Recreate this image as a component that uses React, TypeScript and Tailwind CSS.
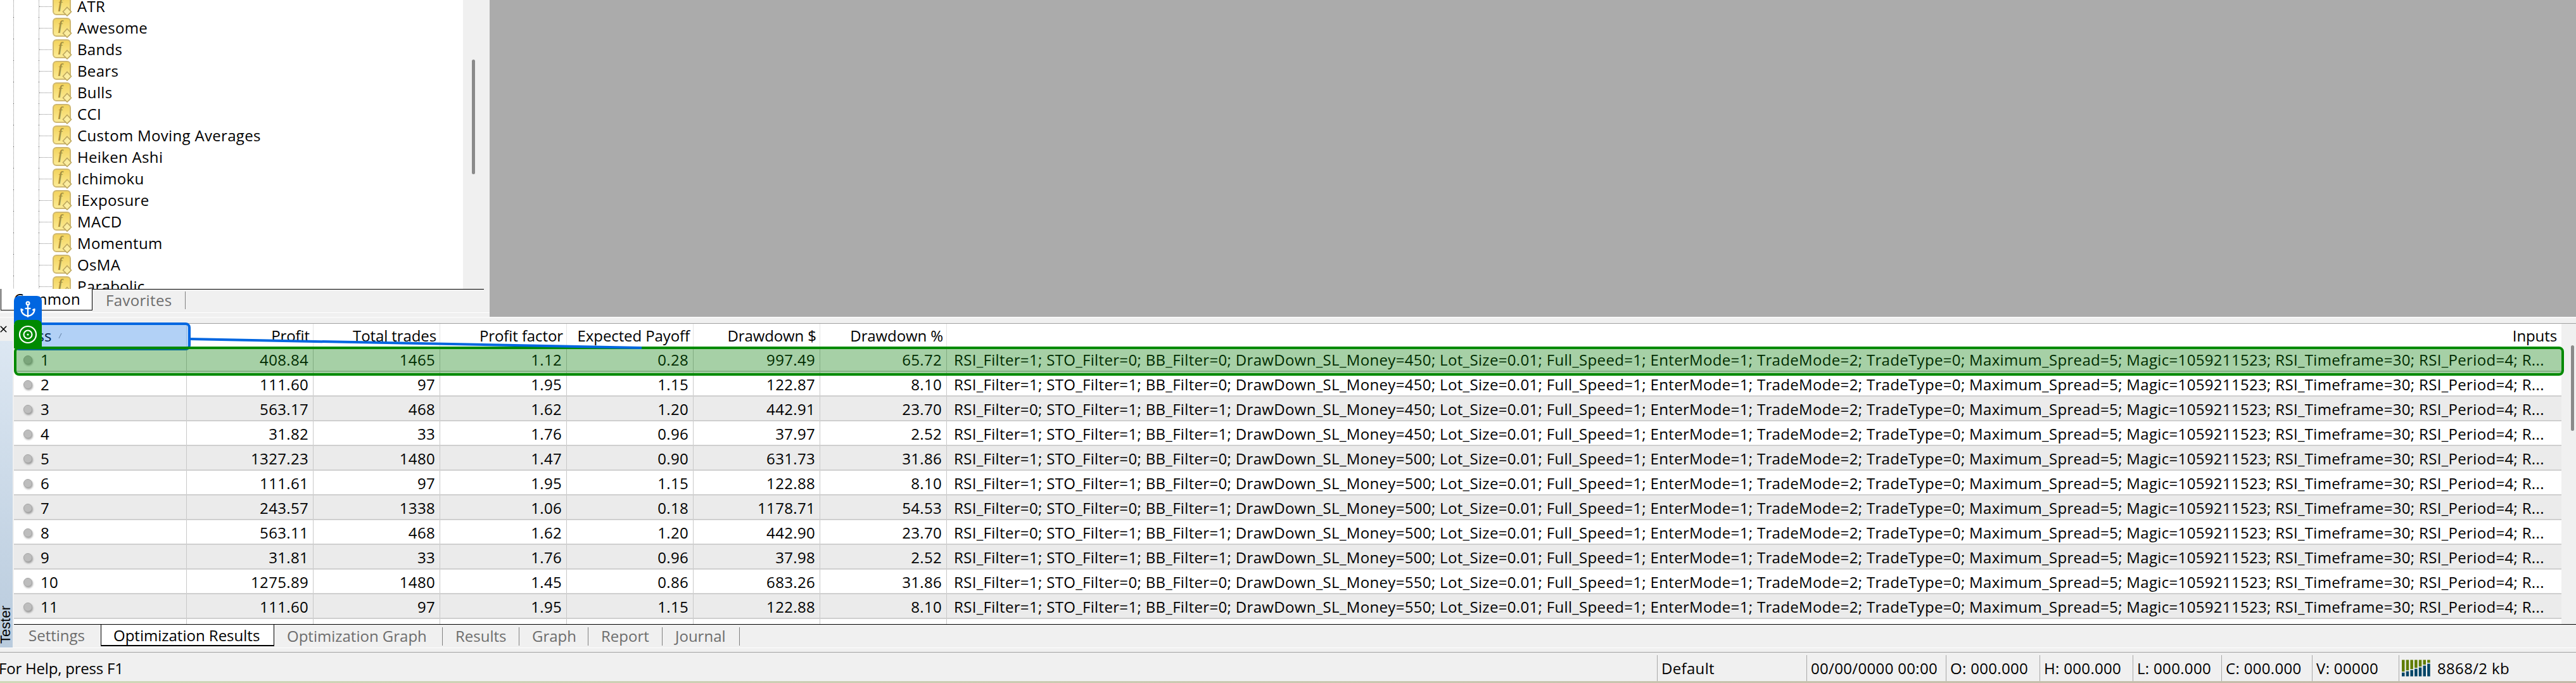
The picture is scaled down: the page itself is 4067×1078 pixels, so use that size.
import { Anchor, X } from 'lucide-react'

const indicators = ['ATR', 'Awesome', 'Bands', 'Bears', 'Bulls', 'CCI', 'Custom Moving Averages', 'Heiken Ashi', 'Ichimoku', 'iExposure', 'MACD', 'Momentum', 'OsMA', 'Parabolic']

const rows = [
  { pass: 1, profit: '408.84', trades: '1465', factor: '1.12', payoff: '0.28', ddMoney: '997.49', ddPct: '65.72', rsi: 1, sto: 0, bb: 0, money: 450 },
  { pass: 2, profit: '111.60', trades: '97', factor: '1.95', payoff: '1.15', ddMoney: '122.87', ddPct: '8.10', rsi: 1, sto: 1, bb: 0, money: 450 },
  { pass: 3, profit: '563.17', trades: '468', factor: '1.62', payoff: '1.20', ddMoney: '442.91', ddPct: '23.70', rsi: 0, sto: 1, bb: 1, money: 450 },
  { pass: 4, profit: '31.82', trades: '33', factor: '1.76', payoff: '0.96', ddMoney: '37.97', ddPct: '2.52', rsi: 1, sto: 1, bb: 1, money: 450 },
  { pass: 5, profit: '1327.23', trades: '1480', factor: '1.47', payoff: '0.90', ddMoney: '631.73', ddPct: '31.86', rsi: 1, sto: 0, bb: 0, money: 500 },
  { pass: 6, profit: '111.61', trades: '97', factor: '1.95', payoff: '1.15', ddMoney: '122.88', ddPct: '8.10', rsi: 1, sto: 1, bb: 0, money: 500 },
  { pass: 7, profit: '243.57', trades: '1338', factor: '1.06', payoff: '0.18', ddMoney: '1178.71', ddPct: '54.53', rsi: 0, sto: 0, bb: 1, money: 500 },
  { pass: 8, profit: '563.11', trades: '468', factor: '1.62', payoff: '1.20', ddMoney: '442.90', ddPct: '23.70', rsi: 0, sto: 1, bb: 1, money: 500 },
  { pass: 9, profit: '31.81', trades: '33', factor: '1.76', payoff: '0.96', ddMoney: '37.98', ddPct: '2.52', rsi: 1, sto: 1, bb: 1, money: 500 },
  { pass: 10, profit: '1275.89', trades: '1480', factor: '1.45', payoff: '0.86', ddMoney: '683.26', ddPct: '31.86', rsi: 1, sto: 0, bb: 0, money: 550 },
  { pass: 11, profit: '111.60', trades: '97', factor: '1.95', payoff: '1.15', ddMoney: '122.88', ddPct: '8.10', rsi: 1, sto: 1, bb: 0, money: 550 },
]

const headers = ['Profit', 'Total trades', 'Profit factor', 'Expected Payoff', 'Drawdown $', 'Drawdown %']

const statusCells = [
  { text: 'Default', width: 'w-[236px]' },
  { text: '00/00/0000 00:00', width: 'w-[220px]' },
  { text: 'O: 000.000', width: 'w-[148px]' },
  { text: 'H: 000.000', width: 'w-[147px]' },
  { text: 'L: 000.000', width: 'w-[140px]' },
  { text: 'C: 000.000', width: 'w-[143px]' },
  { text: 'V: 00000', width: 'w-[137px]' },
]

const bars = [6, 8, 10, 12, 14, 17, 20]

function inputsText(r: (typeof rows)[number]) {
  return `RSI_Filter=${r.rsi}; STO_Filter=${r.sto}; BB_Filter=${r.bb}; DrawDown_SL_Money=${r.money}; Lot_Size=0.01; Full_Speed=1; EnterMode=1; TradeMode=2; TradeType=0; Maximum_Spread=5; Magic=1059211523; RSI_Timeframe=30; RSI_Period=4; R...`
}

function FunctionIcon() {
  return (
    <svg width="31" height="32" viewBox="0 0 31 32" className="shrink-0">
      <defs>
        <linearGradient id="fn-fill" x1="0" y1="0" x2="0" y2="1">
          <stop offset="0" stopColor="#f2d25c" />
          <stop offset="1" stopColor="#fcec96" />
        </linearGradient>
      </defs>
      <rect x="1" y="1" width="27" height="28" rx="5" fill="url(#fn-fill)" stroke="#cfb871" strokeWidth="2" />
      <text x="9" y="19" fontFamily="Liberation Serif" fontStyle="italic" fontWeight="700" fontSize="20" fill="#a6903f">f</text>
      <path d="M23 17.5 L29.5 24.5 L23 31 L16.5 24.5 Z" fill="#fbeda0" stroke="#bda75f" strokeWidth="1.6" />
    </svg>
  )
}

function TabSep() {
  return <span className="h-[29px] w-px bg-[#808080]" />
}

export default function App() {
  return (
    <div className="relative flex h-[1078px] w-[4067px] flex-col overflow-hidden bg-[#f0f0f0] font-['Open_Sans',sans-serif] text-[24px] tracking-[0.33px] text-black">
      {/* Navigator + chart area */}
      <div className="flex h-[500px] shrink-0">
        <div className="flex w-[773px] shrink-0 flex-col">
          <div className="flex h-[456px] shrink-0">
            <div className="w-[731px] overflow-hidden bg-white">
              <div className="-mt-[7px]">
                {indicators.map(name => (
                  <div key={name} className="flex h-[34px] items-center pl-[21px]">
                    <span className="h-full w-[40px] shrink-0 border-l border-dotted border-[#8c8c8c]" />
                    <span className="flex h-full w-[22px] shrink-0 items-center border-l border-dotted border-[#8c8c8c]">
                      <span className="w-[20px] border-t border-dotted border-[#8c8c8c]" />
                    </span>
                    <FunctionIcon />
                    <span className="ml-[8px] whitespace-nowrap">{name}</span>
                  </div>
                ))}
              </div>
            </div>
            <div className="w-[34px] bg-[#f0f0f0] pt-[94px] pl-[14px]">
              <div className="h-[181px] w-[5px] rounded-full bg-[#8a8a8a]" />
            </div>
          </div>
          <div className="flex h-[37px] shrink-0 pr-[9px]">
            <div className="ml-px h-[34px] w-[145px] shrink-0 border-x border-b border-black bg-white pl-[20px] leading-[32px]">Common</div>
            <div className="flex h-[37px] flex-1 items-start border-t border-black pl-[21px]">
              <span className="leading-[33px] text-[#6d6d6d]">Favorites</span>
              <span className="mt-[3px] ml-[21px] h-[28px] w-px bg-[#808080]" />
            </div>
          </div>
          <div className="h-[7px] shrink-0 border-t border-white" />
        </div>
        <div className="flex-1 bg-[#ababab]" />
      </div>
      <div className="h-[2px] shrink-0 bg-[#f8f8f8]" />
      <div className="h-[8px] shrink-0" />

      {/* Tester panel */}
      <div className="flex h-[512px] shrink-0">
        <div className="flex w-[22px] shrink-0 flex-col pr-[2px]">
          <div className="h-[28px] shrink-0 pt-[1px]">
            <X size={17} strokeWidth={2.2} className="-ml-[3px]" />
          </div>
          <div className="flex flex-1 flex-col justify-end overflow-hidden bg-gradient-to-b from-[#dce7f2] to-[#b9cbdd] pb-[6px]">
            <span className="-ml-[4px] rotate-180 font-['Liberation_Sans',sans-serif] text-[22px] leading-[26px] tracking-normal [writing-mode:vertical-rl]">Tester</span>
          </div>
        </div>

        <div className="flex min-w-0 flex-1 flex-col">
          <div className="flex h-[475px] shrink-0 border-t border-[#a0a0a0]">
            <div className="min-w-0 flex-1 overflow-hidden bg-white">
              {/* Header */}
              <div className="flex h-[37px] items-center tracking-[-0.1px]">
                <div className="flex h-full w-[273px] shrink-0 items-center border-r border-[#e4e4e4] pl-[9px]">
                  <span>Pass</span>
                  <svg width="6" height="10" viewBox="0 0 6 10" className="ml-[11px]">
                    <path d="M1 9 L5 1" stroke="#8a8a8a" strokeWidth="1" />
                  </svg>
                </div>
                {headers.map(h => (
                  <div key={h} className="flex h-full w-[200px] shrink-0 items-center justify-end border-r border-[#e4e4e4] pr-[5px] whitespace-nowrap">{h}</div>
                ))}
                <div className="flex h-full flex-1 items-center justify-end pr-[7px]">Inputs</div>
              </div>
              {/* Rows */}
              {rows.map(r => (
                <div key={r.pass} className={`flex h-[39px] items-center border-b-2 border-[#cfcfcf] ${r.pass % 2 === 1 && r.pass !== 1 ? 'bg-[#ebebeb]' : 'bg-white'}`}>
                  <div className="flex h-full w-[273px] shrink-0 items-center border-r border-[#c8c8c8] pt-[2px] pl-[15px]">
                    <span className="h-[14px] w-[14px] rounded-full border border-[#a6a6a6] bg-[#bdbdbd] shadow-[1px_2px_3px_rgba(0,0,0,0.35)]" />
                    <span className="ml-[13px]">{r.pass}</span>
                  </div>
                  <div className="flex h-full items-center">
                    {[r.profit, r.trades, r.factor, r.payoff, r.ddMoney, r.ddPct].map((v, i) => (
                      <div key={i} className="flex h-full w-[200px] shrink-0 items-center justify-end border-r border-[#c8c8c8] pt-[2px] pr-[7px]">{v}</div>
                    ))}
                  </div>
                  <div className="min-w-0 flex-1 overflow-hidden pt-[2px] pl-[11px] whitespace-nowrap">{inputsText(r)}</div>
                </div>
              ))}
              <div className="flex h-[8px]">
                <div className="w-[273px] shrink-0 border-r border-[#c8c8c8]" />
                {headers.map(h => (
                  <div key={h} className="w-[200px] shrink-0 border-r border-[#c8c8c8]" />
                ))}
              </div>
            </div>
            <div className="w-[23px] shrink-0 pt-[34px] pl-[15px]">
              <div className="h-[135px] w-[5px] rounded-full bg-[#8a8a8a]" />
            </div>
          </div>

          {/* Tester tabs */}
          <div className="flex h-[37px] shrink-0 items-start border-t border-black tracking-[0px] text-[#6d6d6d]">
            <div className="w-[137px] pl-[23px] leading-[34px]">Settings</div>
            <div className="h-[34px] w-[274px] border-x border-b-2 border-black bg-white pl-[19px] leading-[33px] whitespace-nowrap text-black">Optimization Results</div>
            <div className="flex items-center pt-[2px] leading-[32px]">
              <span className="ml-[20px] w-[245px] whitespace-nowrap">Optimization Graph</span>
              <TabSep />
              <span className="ml-[20px] w-[100px]">Results</span>
              <TabSep />
              <span className="ml-[20px] w-[88px]">Graph</span>
              <TabSep />
              <span className="ml-[20px] w-[96px]">Report</span>
              <TabSep />
              <span className="ml-[20px] w-[101px]">Journal</span>
              <TabSep />
            </div>
          </div>
        </div>
      </div>

      {/* Status bar */}
      <div className="h-px shrink-0 bg-white" />
      <div className="h-[6px] shrink-0" />
      <div className="h-px shrink-0 bg-[#a0a0a0]" />
      <div className="flex h-[45px] shrink-0 items-end">
        <div className="-ml-[2px] flex h-[41px] flex-1 items-center tracking-[-0.2px]">For Help, press F1</div>
        {statusCells.map(c => (
          <div key={c.text} className={`flex h-[41px] shrink-0 items-center border-l border-[#a8a8a8] pl-[6px] whitespace-nowrap ${c.width}`}>{c.text}</div>
        ))}
        <div className="flex h-[41px] w-[280px] shrink-0 items-center border-l border-[#a8a8a8] pl-[4px]">
          <svg width="48" height="27" viewBox="0 0 48 27" className="shrink-0">
            {bars.map((b, i) => (
              <g key={i}>
                <rect x={i * 6.7} y="0.5" width="4.5" height={26 - b - 1.5} fill="#5f7c00" />
                <rect x={i * 6.7} y={26.5 - b} width="4.5" height={b} fill="#004466" />
              </g>
            ))}
          </svg>
          <span className="ml-[8px]">8868/2 kb</span>
        </div>
      </div>
      <div className="h-[3px] shrink-0 bg-gradient-to-r from-[#cfd8b8] to-[#c2b9a8]" />

      {/* Annotation overlays */}
      <div className="absolute top-[509px] left-[22px] h-[44px] w-[279px] rounded-[8px] border-4 border-[#0066e0] bg-[#0066e0]/30" />
      <div className="absolute top-[547px] left-[22px] h-[46px] w-[4026px] rounded-[8px] border-4 border-[#008a00] bg-[#007800]/35" />
      <svg className="absolute top-[530px] left-[299px]" width="716" height="24" viewBox="0 0 716 24">
        <polygon points="0,3 0,7 714,21 714,17" fill="#0066e0" />
      </svg>
      <div className="absolute top-[467px] left-[22px] flex h-[44px] w-[44px] justify-center rounded-t-[8px] bg-[#0066e0] pt-[7px] text-white">
        <Anchor size={28} strokeWidth={2} />
      </div>
      <div className="absolute top-[505px] left-[22px] flex h-[45px] w-[44px] items-center justify-center rounded-t-[8px] bg-[#008a00]">
        <svg width="30" height="30" viewBox="0 0 30 30" fill="none" stroke="#fff" strokeWidth="2.2">
          <circle cx="15" cy="15" r="13" />
          <circle cx="15" cy="15" r="6.5" />
          <circle cx="15" cy="15" r="1.6" fill="#fff" stroke="none" />
        </svg>
      </div>
    </div>
  )
}
